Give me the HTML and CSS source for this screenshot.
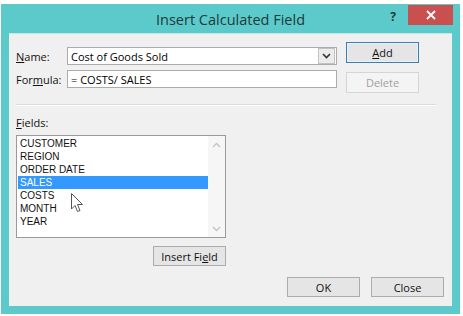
FILE: index.html
```html
<!DOCTYPE html>
<html lang="en">
  <head>
    <meta charset="UTF-8" />
    <meta name="viewport" content="width=device-width, initial-scale=1.0" />
    <title>Insert Calculated Field</title>
    <link rel="stylesheet" href="styles.css">
  </head>
  <body>
    <div class="window">
      <div class="titleBar">
        <span></span>
        <span class="title">Insert Calculated Field</span>
        <div class="controls">
          <span class="help">?</span>
          <span class="closeX">
            <svg width="10" height="10" viewBox="0 0 10 10">
              <path d="M1 1 L9 9 M9 1 L1 9" stroke="#fff" stroke-width="1.8" />
            </svg>
          </span>
        </div>
      </div>

      <div class="content">
        <div class="topSection">
          <div class="form">
            <div class="formRow">
              <label class="label"><u>N</u>ame:</label>
              <div class="combo">
                <span class="comboText">Cost of Goods Sold</span>
                <span class="comboArrow">
                  <svg width="9" height="6" viewBox="0 0 9 6">
                    <path d="M1 1 L4.5 4.5 L8 1" stroke="#333" stroke-width="1.6" fill="none" />
                  </svg>
                </span>
              </div>
            </div>
            <div class="formRow">
              <label class="label">For<u>m</u>ula:</label>
              <div class="textBox">= COSTS/ SALES</div>
            </div>
          </div>
          <div class="sideButtons">
            <button class="btn btnFocus"><u>A</u>dd</button>
            <button class="btn btnDisabled"><u>D</u>elete</button>
          </div>
        </div>

        <div class="separator"></div>

        <div class="fieldsSection">
          <label class="label fieldsLabel"><u>F</u>ields:</label>
          <div class="listBox">
            <ul class="items">
              <li>CUSTOMER</li>
              <li>REGION</li>
              <li>ORDER DATE</li>
              <li class="selected">SALES</li>
              <li>COSTS</li>
              <li>MONTH</li>
              <li>YEAR</li>
            </ul>
            <div class="scrollBar">
              <svg width="9" height="6" viewBox="0 0 9 6">
                <path d="M1 5 L4.5 1.5 L8 5" stroke="#c4c4c4" stroke-width="1.4" fill="none" />
              </svg>
              <svg width="9" height="6" viewBox="0 0 9 6">
                <path d="M1 1 L4.5 4.5 L8 1" stroke="#c4c4c4" stroke-width="1.4" fill="none" />
              </svg>
            </div>
            <svg class="cursor" width="13" height="20" viewBox="0 0 13 20">
              <path d="M0.5 0.5 L0.5 16 L4 12.5 L6.5 18.5 L9 17.5 L6.5 11.5 L11.5 11.5 Z" fill="#fff" stroke="#555" stroke-width="1" stroke-linejoin="round" />
            </svg>
          </div>
          <div class="insertRow">
            <button class="btn">Insert Fi<u>e</u>ld</button>
          </div>
        </div>

        <div class="footer">
          <button class="btn">OK</button>
          <button class="btn">Close</button>
        </div>
      </div>
    </div>
  </body>
</html>
```

FILE: styles.css
```css
html,
body {
  overflow: hidden;
}
body {
  margin: 0;
  padding: 4px 3px 2px 1px;
  background-color: #fff;
  font-family: "Open Sans", "Noto Sans", sans-serif;
  font-size: 11px;
  color: #000;
}

/* Window frame */
.window {
  width: 459px;
  height: 310px;
  background-color: #5ccaca;
  padding: 0 8px 8px 8px;
  box-sizing: border-box;
  display: flex;
  flex-direction: column;
}

/* Title bar */
.titleBar {
  height: 29px;
  flex-shrink: 0;
  display: grid;
  grid-template-columns: 1fr auto 1fr;
  margin: 0 -8px;
}
.title {
  font-size: 14.5px;
  color: #1d3a3a;
  line-height: 31px;
}
.controls {
  display: flex;
  justify-content: flex-end;
  align-items: flex-start;
  padding-right: 7px;
}
.help {
  font-weight: bold;
  font-size: 12px;
  color: #1d3a3a;
  margin-top: 4px;
  margin-right: 12px;
}
.closeX {
  width: 45px;
  height: 20px;
  margin-top: 1px;
  background-color: #c9504e;
  display: flex;
  align-items: center;
  justify-content: center;
}

/* Dialog body */
.content {
  flex: 1;
  background-color: #f0f0f0;
  border-top: 1px solid #c9e6e6;
  padding: 8px 8px 9px 7px;
  display: flex;
  flex-direction: column;
}

.topSection {
  display: flex;
  align-items: flex-start;
}
.form {
  margin-top: 5px;
  display: flex;
  flex-direction: column;
  gap: 5px;
}
.formRow {
  display: flex;
  align-items: center;
}
.label {
  width: 51px;
  color: #111;
}
.combo,
.textBox {
  width: 270px;
  height: 18px;
  box-sizing: border-box;
  background-color: #fff;
  border: 1px solid #acacac;
  display: flex;
  align-items: center;
}
.comboText,
.textBox {
  padding-left: 3px;
}
.comboText {
  flex: 1;
}
.comboArrow {
  width: 15px;
  height: 14px;
  margin-right: 1px;
  border: 1px solid #c2c2c2;
  background-color: #ececec;
  display: flex;
  align-items: center;
  justify-content: center;
}

.sideButtons {
  margin-left: 9px;
  display: flex;
  flex-direction: column;
  gap: 9px;
}

/* Buttons */
.btn {
  width: 73px;
  height: 20px;
  padding: 0;
  font-family: inherit;
  font-size: 11px;
  color: #111;
  background-color: #e5e5e5;
  border: 1px solid #acacac;
}
.sideButtons .btn {
  height: 21px;
}
.btnFocus {
  border-color: #3c7fb1;
  box-shadow: inset 0 0 0 1px #e8f0f8;
}
.btnDisabled {
  color: #a0a0a0;
  background-color: #f4f4f4;
  border-color: #d5d5d5;
}
.btnDisabled u {
  text-decoration: none;
}

.separator {
  margin: 11px 8px 0 0;
  height: 1px;
  background-color: #dcdcdc;
  border-bottom: 1px solid #fff;
}

/* Fields list */
.fieldsSection {
  display: flex;
  flex-direction: column;
  width: 210px;
}
.fieldsLabel {
  margin-top: 9px;
  line-height: 15px;
}
.listBox {
  position: relative;
  margin-top: 5px;
  height: 103px;
  box-sizing: border-box;
  background-color: #fff;
  border: 1px solid #9a9a9a;
  display: flex;
}
.items {
  list-style: none;
  margin: 0;
  padding: 1px 0 0 1px;
  flex: 1;
}
.items li {
  height: 13px;
  line-height: 13px;
  padding-left: 2px;
  font-family: "Liberation Sans", Arial, sans-serif;
  font-size: 10px;
  color: #111;
}
.items li.selected {
  background-color: #3399ff;
  color: #fff;
}
.scrollBar {
  width: 17px;
  background-color: #f6f6f6;
  display: flex;
  flex-direction: column;
  justify-content: space-between;
  align-items: center;
  padding: 6px 0 5px;
}
.cursor {
  position: absolute;
  left: 54px;
  top: 57px;
}

.insertRow {
  display: flex;
  justify-content: flex-end;
  margin-top: 8px;
}
.insertRow .btn {
  height: 20px;
}

.footer {
  margin-top: auto;
  display: flex;
  justify-content: flex-end;
  gap: 11px;
}
```
